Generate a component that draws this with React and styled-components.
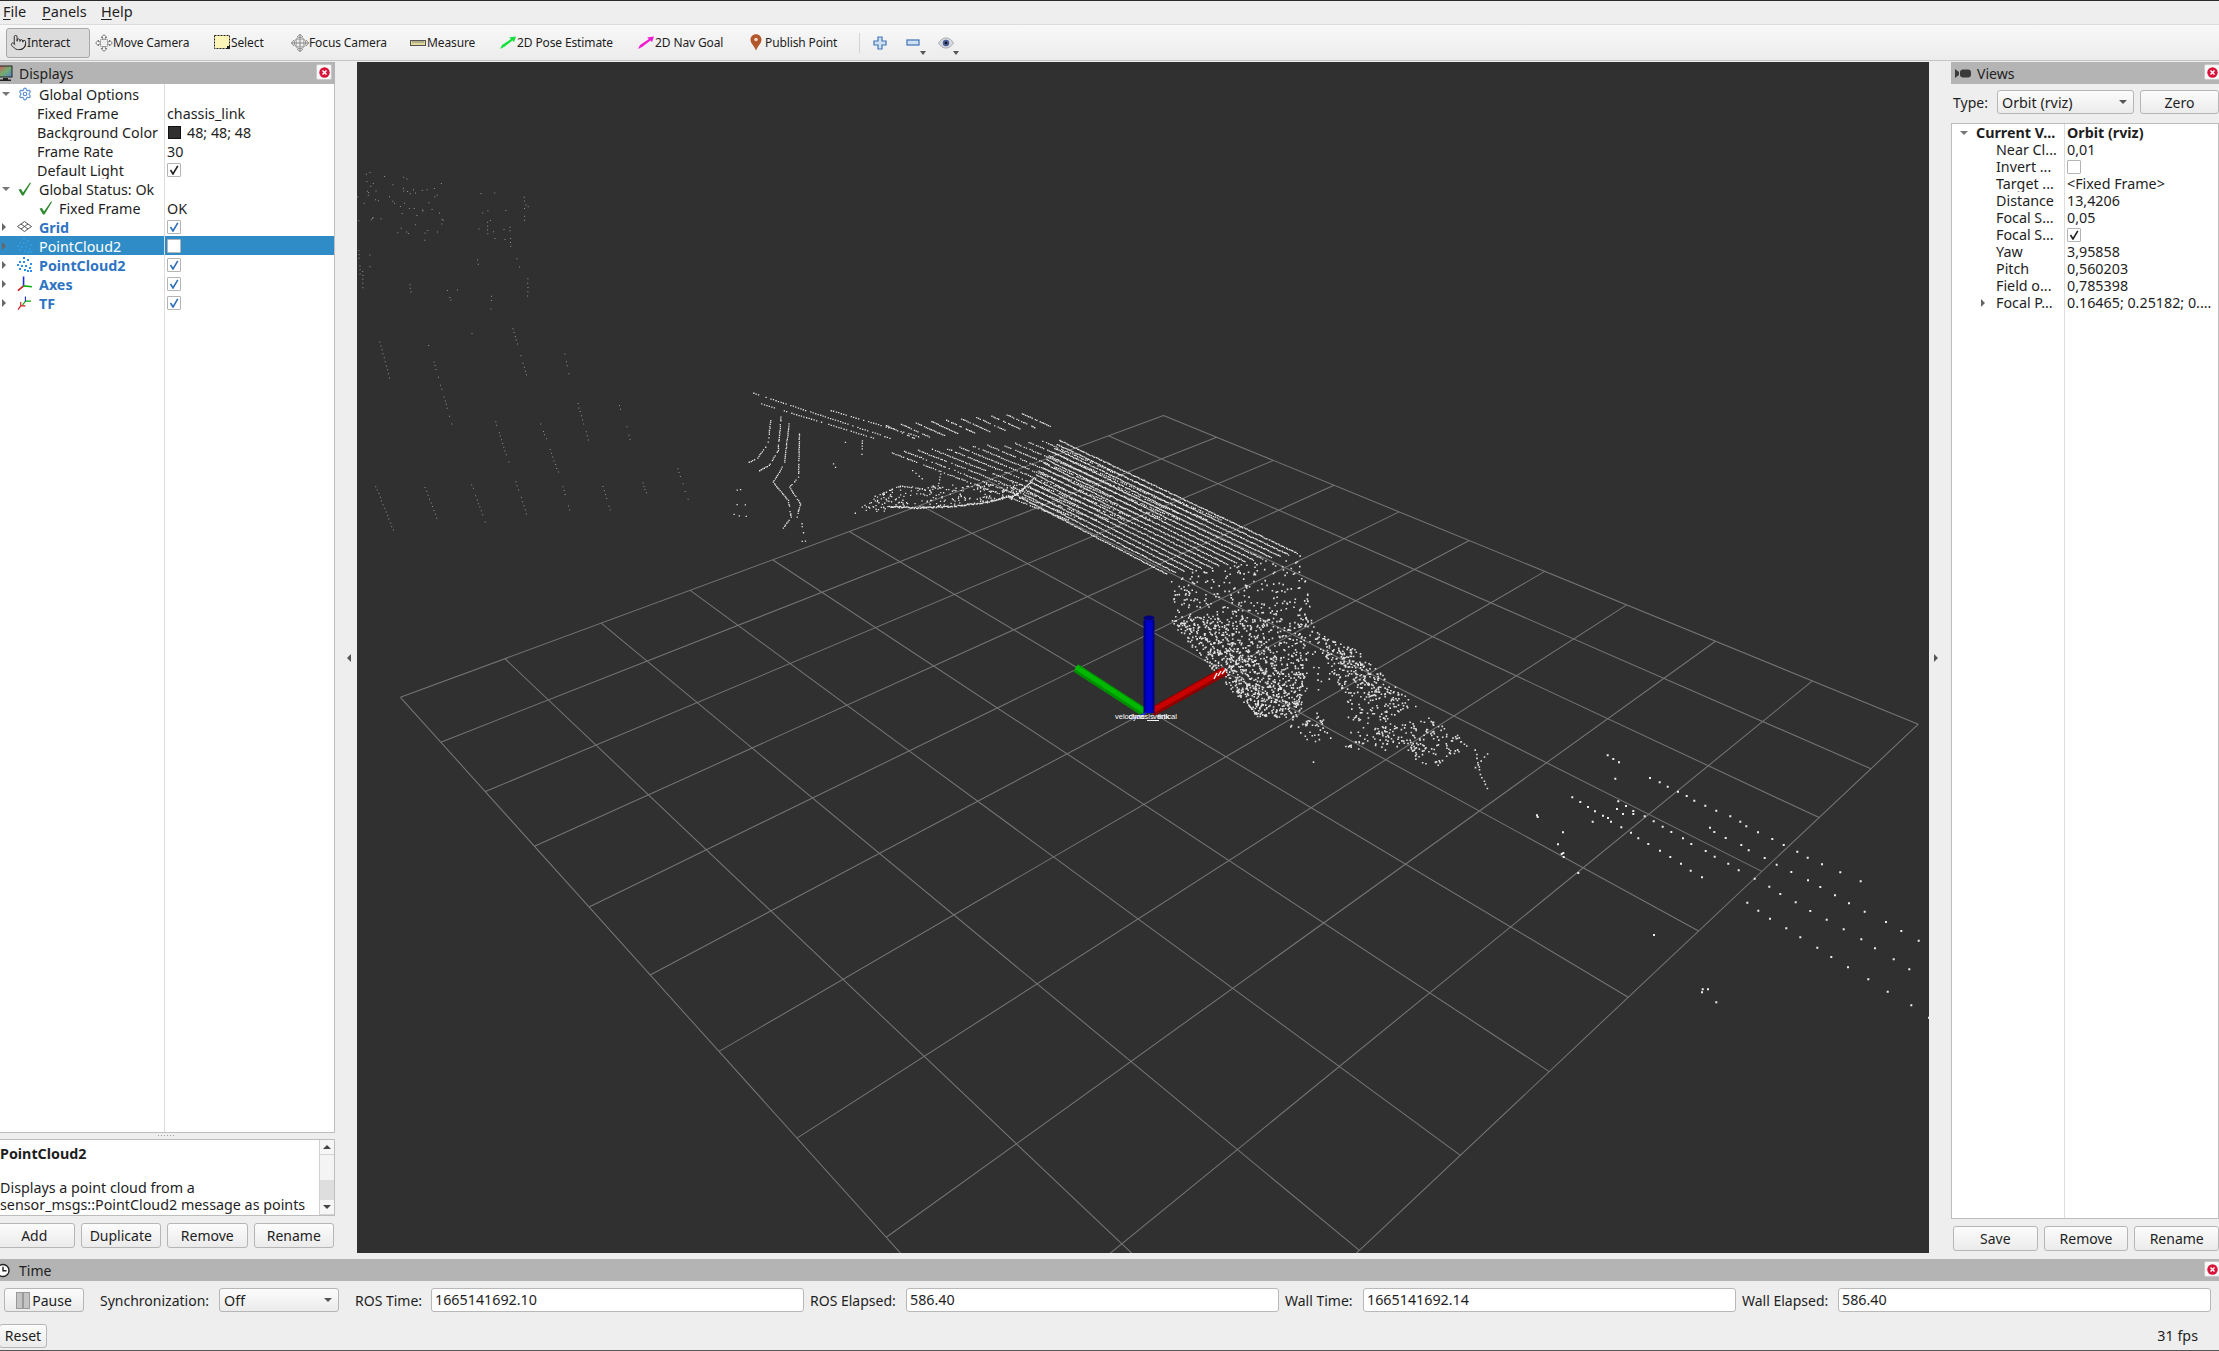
import React, { useMemo } from "react";
import styled, { createGlobalStyle, css } from "styled-components";
import { Pointer, Settings } from "lucide-react";

const GlobalStyle = createGlobalStyle`
  html, body { margin: 0; padding: 0; background: #eeeeee; }
  body { font-family: "Noto Sans", "Open Sans", sans-serif; font-size: 14.3px; color: #1e1e1e; }
`;

const Window = styled.div`
  width: 2219px;
  height: 1351px;
  overflow: hidden;
  display: flex;
  flex-direction: column;
  background: #eeeeee;
  border-top: 1px solid #2a2a2a;
  box-sizing: border-box;
`;

/* menu + toolbar */
const MenuBar = styled.div`
  height: 23px;
  display: flex;
  align-items: center;
  padding: 0 0 2px 3px;
  box-sizing: border-box;
  gap: 14px;
  font-size: 14.5px;
  flex: none;
`;
const MenuItem = styled.span`
  width: ${p => p.$w}px;
  line-height: 21px;
`;
const Mnemonic = styled.span`
  text-decoration: underline;
  text-underline-offset: 2px;
`;
const ToolBar = styled.div`
  height: 37px;
  flex: none;
  display: flex;
  align-items: center;
  padding-left: 6px;
  box-sizing: border-box;
  background: linear-gradient(#f8f8f8, #ececec);
  border-top: 1px solid #dcdcdc;
  border-bottom: 1px solid #c4c4c4;
  font-size: 12px;
  letter-spacing: -0.12px;
  margin-bottom: 1px;
`;
const ToolButton = styled.div`
  width: ${p => p.$w}px;
  height: 30px;
  flex: none;
  display: flex;
  align-items: center;
  padding-left: 3px;
  box-sizing: border-box;
  white-space: nowrap;
  ${p =>
    p.$active &&
    css`
      background: #dcdcdc;
      border: 1px solid #a8a8a8;
      border-radius: 3px;
      padding-left: 2px;
      width: ${p.$w - 2}px;
      margin-right: 2px;
    `}
`;
const ToolIcon = styled.span`
  width: 18px;
  height: 18px;
  flex: none;
  display: flex;
  align-items: center;
  justify-content: center;
`;
const ToolSep = styled.div`
  width: 1px;
  height: 20px;
  margin: 0 3px 0 3px;
  background: #d4d4d4;
`;
const IconButton = styled.div`
  width: 33px;
  height: 30px;
  flex: none;
  position: relative;
  display: flex;
  align-items: center;
  justify-content: center;
`;
const DropMark = styled.span`
  position: absolute;
  right: 3px;
  bottom: 3px;
  border-left: 3px solid transparent;
  border-right: 3px solid transparent;
  border-top: 4px solid #555;
`;

/* main layout */
const Main = styled.div`
  height: 1191px;
  flex: none;
  display: flex;
`;
const Dock = styled.div`
  width: ${p => p.$w}px;
  flex: none;
  display: flex;
  flex-direction: column;
  overflow: hidden;
`;
const DockHeader = styled.div`
  height: 22px;
  flex: none;
  display: flex;
  align-items: center;
  background: #b4b4b4;
  padding-left: ${p => p.$pad || 0}px;
  gap: 6px;
  font-size: 14px;
  color: #222;
  position: relative;
  overflow: hidden;
`;
const CloseBox = styled.div`
  position: absolute;
  right: ${p => p.$right || 2}px;
  top: 2px;
  width: 16px;
  height: 16px;
  box-sizing: border-box;
  background: #f8f8f8;
  border: 1px solid #c8c8c8;
  border-radius: 2px;
  display: flex;
  align-items: center;
  justify-content: center;
`;
const Gutter = styled.div`
  width: ${p => p.$w}px;
  flex: none;
  display: flex;
  align-items: center;
  justify-content: ${p => (p.$right ? "flex-start" : "flex-end")};
  padding: ${p => (p.$right ? "0 0 0 5px" : "0 6px 0 0")};
  box-sizing: border-box;
`;
const Collapse = styled.span`
  border-top: 4px solid transparent;
  border-bottom: 4px solid transparent;
  ${p =>
    p.$right
      ? "border-left: 4px solid #555;"
      : "border-right: 4px solid #555;"}
`;
const Viewport = styled.div`
  flex: 1;
  background: #303030;
  overflow: hidden;
`;
const SceneSvg = styled.svg`
  display: block;
  width: 1572px;
  height: 1191px;
`;

/* property tree */
const Tree = styled.div`
  flex: 1;
  display: flex;
  flex-direction: column;
  background: #ffffff;
  border: 1px solid #bdbdbd;
  border-left-width: ${p => (p.$noLeft ? 0 : 1)}px;
  border-top-width: ${p => (p.$framed ? 1 : 0)}px;
  min-height: 0;
  overflow: hidden;
`;
const Row = styled.div`
  height: ${p => p.$h}px;
  flex: none;
  display: grid;
  grid-template-columns: ${p => p.$col}px 1fr;
  ${p =>
    p.$selected &&
    css`
      background: #308cc6;
      color: #fff;
    `}
`;
const FillRow = styled(Row)`
  flex: 1;
  height: auto;
`;
const NameCell = styled.div`
  position: relative;
  border-right: 1px solid #dddddd;
  white-space: nowrap;
  overflow: hidden;
  display: flex;
  align-items: center;
  padding-left: ${p => p.$indent}px;
  padding-top: ${p => p.$top || 0}px;
  box-sizing: border-box;
  font-weight: ${p => (p.$bold ? 700 : 400)};
  color: ${p => (p.$blue ? "#2e74c2" : "inherit")};
`;
const ValueCell = styled.div`
  display: flex;
  align-items: center;
  gap: 6px;
  padding-left: 2px;
  padding-top: ${p => p.$top || 0}px;
  white-space: nowrap;
  overflow: hidden;
  font-weight: ${p => (p.$bold ? 700 : 400)};
`;
const Twisty = styled.span`
  position: absolute;
  left: ${p => p.$left}px;
  top: 50%;
  ${p =>
    p.$open
      ? css`
          margin-top: -2px;
          border-left: 4px solid transparent;
          border-right: 4px solid transparent;
          border-top: 4px solid #777;
        `
      : css`
          margin-top: -4px;
          border-top: 4px solid transparent;
          border-bottom: 4px solid transparent;
          border-left: 4px solid #666;
        `}
`;
const RowIcon = styled.span`
  position: absolute;
  left: ${p => p.$left}px;
  top: 2px;
  width: 15px;
  height: 15px;
  display: flex;
  align-items: center;
  justify-content: center;
`;
const CheckBox = styled.span`
  width: 14px;
  height: 14px;
  box-sizing: border-box;
  background: #fff;
  border: 1px solid #b4b4b4;
  border-radius: 1px;
  display: flex;
  align-items: center;
  justify-content: center;
  flex: none;
`;
const Swatch = styled.span`
  width: 13px;
  height: 13px;
  box-sizing: border-box;
  background: #303030;
  border: 1px solid #111;
  margin-left: 1px;
  flex: none;
`;

/* description */
const Splitter = styled.div`
  height: 5px;
  flex: none;
  display: flex;
  justify-content: center;
  align-items: center;
`;
const SplitDots = styled.span`
  width: 16px;
  height: 1px;
  margin-left: -4px;
  background: repeating-linear-gradient(90deg, #a0a0a0 0 1px, transparent 1px 3px);
`;
const Description = styled.div`
  height: 77px;
  flex: none;
  margin-top: 1px;
  display: flex;
  background: #fff;
  border: 1px solid #bdbdbd;
  border-left: 0;
  box-sizing: border-box;
`;
const DescText = styled.div`
  flex: 1;
  overflow: hidden;
  line-height: 17px;
  padding-top: 5px;
  white-space: nowrap;
`;
const DescTitle = styled.div`
  font-weight: 700;
  height: 34px;
`;
const ScrollBar = styled.div`
  width: 14px;
  flex: none;
  display: flex;
  flex-direction: column;
  background: #f4f4f4;
  border-left: 1px solid #d0d0d0;
`;
const ScrollButton = styled.div`
  height: 14px;
  flex: none;
  display: flex;
  align-items: center;
  justify-content: center;
  background: #f6f6f6;
  border-bottom: 1px solid #d4d4d4;
`;
const ScrollArrow = styled.span`
  border-left: 4px solid transparent;
  border-right: 4px solid transparent;
  ${p => (p.$down ? "border-top: 4px solid #444;" : "border-bottom: 4px solid #444;")}
`;
const ScrollGap = styled.div`
  flex: 1;
`;
const ScrollThumb = styled.div`
  height: 20px;
  flex: none;
  background: #dedede;
`;

/* buttons */
const ButtonRow = styled.div`
  display: flex;
  gap: 6px;
  flex: none;
  margin: ${p => p.$margin};
`;
const Button = styled.div`
  flex: ${p => (p.$w ? "none" : 1)};
  width: ${p => (p.$w ? p.$w + "px" : "auto")};
  height: ${p => p.$h || 25}px;
  box-sizing: border-box;
  display: flex;
  align-items: center;
  justify-content: center;
  gap: 2px;
  border: 1px solid #b6b6b6;
  border-radius: 3px;
  background: linear-gradient(#fcfcfc, #ebebeb);
  font-size: 14px;
`;
const TypeRow = styled.div`
  height: 24px;
  flex: none;
  margin: 6px 0 9px 0;
  display: flex;
  align-items: center;
  padding-left: 2px;
  gap: 6px;
`;
const PlainLabel = styled.span`
  width: ${p => p.$w}px;
  flex: none;
  white-space: nowrap;
  margin-left: ${p => p.$ml || 0}px;
  font-size: 14px;
`;
const Combo = styled.div`
  width: ${p => p.$w}px;
  height: 24px;
  flex: none;
  box-sizing: border-box;
  display: flex;
  align-items: center;
  justify-content: space-between;
  padding: 0 6px 0 4px;
  border: 1px solid #b6b6b6;
  border-radius: 3px;
  background: linear-gradient(#fcfcfc, #ebebeb);
  margin-right: ${p => p.$mr || 0}px;
`;
const ComboArrow = styled.span`
  border-left: 4px solid transparent;
  border-right: 4px solid transparent;
  border-top: 4px solid #555;
`;

/* time panel */
const TimeDock = styled.div`
  flex: 1;
  margin-top: 6px;
  display: flex;
  flex-direction: column;
  overflow: hidden;
`;
const TimeRow = styled.div`
  height: 24px;
  flex: none;
  margin-top: 7px;
  padding: 0 8px 0 4px;
  display: flex;
  align-items: center;
  gap: 6px;
`;
const LineEdit = styled.div`
  flex: 1;
  height: 24px;
  box-sizing: border-box;
  background: #fff;
  border: 1px solid #b8b8b8;
  border-radius: 3px;
  padding-left: 3px;
  line-height: 22px;
`;
const StatusRow = styled.div`
  height: 23px;
  flex: none;
  margin-top: 12px;
  display: flex;
  align-items: center;
  justify-content: space-between;
  padding-right: 21px;
`;
const ResetButton = styled(Button)`
  flex: none;
  width: 48px;
  height: 24px;
  margin-left: -1px;
`;
const WindowEdge = styled.div`
  height: 1px;
  margin-top: 3px;
  flex: none;
  background: #555;
`;

/* icons */
const DropShape = ({ color }) => (
  <svg width="18" height="14" viewBox="0 0 18 14">
    <path d="M1 13 L3 9 L12 3 L10 1.5 L17 0.5 L15 6 L13.5 4.5 L5 11 Z" fill={color} />
  </svg>
);
const MoveIcon = () => (
  <svg width="18" height="18" viewBox="0 0 18 18" fill="#fff" stroke="#777" strokeWidth="1">
    <path d="M9 .7 12 3.5H10.2V6H7.8V3.5H6ZM9 17.3 6 14.5H7.8V12H10.2V14.5H12ZM.7 9 3.5 6V7.8H6V10.2H3.5V12ZM17.3 9 14.5 12V10.2H12V7.8H14.5V6Z" />
    <rect x="5.5" y="5.5" width="7" height="7" fill="#eee" strokeDasharray="1 1" />
  </svg>
);
const SelectIcon = () => (
  <svg width="17" height="15" viewBox="0 0 17 15">
    <rect x=".5" y=".5" width="15" height="13" fill="#fbf6b8" stroke="#222" strokeDasharray="2 1" />
    <rect x="13" y="11" width="3" height="3" fill="#222" />
  </svg>
);
const FocusIcon = () => (
  <svg width="18" height="18" viewBox="0 0 18 18" fill="none" stroke="#888" strokeWidth="1">
    <circle cx="9" cy="9" r="5.5" fill="#eee" />
    <path d="M9 0V18M0 9H18M6 3 9 .5 12 3M6 15 9 17.5 12 15M3 6 .5 9 3 12M15 6 17.5 9 15 12" />
    <path d="M5.5 5.5H12.5V12.5H5.5Z" strokeDasharray="1 1" />
  </svg>
);
const RulerIcon = () => (
  <svg width="16" height="6" viewBox="0 0 16 6">
    <rect x=".5" y=".5" width="15" height="5" fill="#e0d79a" stroke="#555" />
    <path d="M3 1V3M5 1V3M7 1V3M9 1V3M11 1V3M13 1V3" stroke="#666" strokeWidth=".7" />
  </svg>
);
const PinIcon = () => (
  <svg width="12" height="17" viewBox="0 0 12 17">
    <path d="M6 .3C2.8.3.5 2.7.5 5.8.5 9.5 4.7 12.5 6 16.7 7.3 12.5 11.5 9.5 11.5 5.8 11.5 2.7 9.2.3 6 .3Z" fill="#b2562c" />
    <circle cx="6" cy="5.5" r="1.8" fill="#f0d9c8" />
  </svg>
);
const PlusIcon = () => (
  <svg width="14" height="14" viewBox="0 0 14 14">
    <path d="M5 1H9V5H13V9H9V13H5V9H1V5H5Z" fill="#cfe0f2" stroke="#3f74b5" strokeWidth="1.2" />
  </svg>
);
const MinusIcon = () => (
  <svg width="14" height="8" viewBox="0 0 14 8">
    <rect x="1" y="1" width="12" height="5" fill="#cfe0f2" stroke="#3f74b5" strokeWidth="1.2" />
  </svg>
);
const EyeIcon = () => (
  <svg width="16" height="12" viewBox="0 0 16 12">
    <path d="M.5 6C3 2 5.5 1 8 1s5 1 7.5 5c-2.5 4-5 5-7.5 5S3 10 .5 6Z" fill="#d5d8dd" stroke="#a8abb0" />
    <circle cx="8" cy="6" r="3.2" fill="#4a5c9a" />
    <circle cx="8" cy="6" r="1.3" fill="#111" />
  </svg>
);
const MonitorIcon = () => (
  <svg width="13" height="17" viewBox="0 0 13 17">
    <defs>
      <linearGradient id="screenGrad" x1="0" x2="1" y1="0" y2="1">
        <stop offset="0" stopColor="#d25a5a" />
        <stop offset=".5" stopColor="#6fae6f" />
        <stop offset="1" stopColor="#5b7fd0" />
      </linearGradient>
    </defs>
    <rect x="-1" y="1" width="13" height="11" fill="url(#screenGrad)" stroke="#222" />
    <path d="M3 13H8V14.5H11V16H0V14.5H3Z" fill="#222" />
  </svg>
);
const CameraIcon = () => (
  <svg width="16" height="9" viewBox="0 0 16 9">
    <path d="M0 0 4 3V6L0 9Z" fill="#3a3a3a" />
    <rect x="5" y="0.5" width="11" height="8" rx="3" fill="#3a3a3a" />
  </svg>
);
const ClockIcon = () => (
  <svg width="13" height="15" viewBox="0 0 13 15">
    <circle cx="3" cy="7.5" r="6" fill="#fff" stroke="#222" strokeWidth="1.4" />
    <path d="M3 3.8V7.8H6.5" fill="none" stroke="#222" strokeWidth="1.4" />
  </svg>
);
const CloseIcon = () => (
  <svg width="11" height="11" viewBox="0 0 11 11">
    <circle cx="5.5" cy="5.5" r="5.2" fill="#d8143a" />
    <path d="M3.5 3.5 7.5 7.5M7.5 3.5 3.5 7.5" stroke="#fff" strokeWidth="1.5" />
  </svg>
);
const Tick = ({ color = "#222" }) => (
  <svg width="10" height="10" viewBox="0 0 10 10">
    <path d="M1.5 5 4 9 8.8 .8" fill="none" stroke={color} strokeWidth="1.6" />
  </svg>
);
const GreenCheck = () => (
  <svg width="14" height="14" viewBox="0 0 14 14">
    <path d="M.5 7.5 3 7 5 10.5 12 .5 13 1 5.5 13.5H4Z" fill="#2c8a2c" />
  </svg>
);
const GridIcon = () => (
  <svg width="15" height="11" viewBox="0 0 15 11" fill="none" stroke="#444" strokeWidth=".9">
    <path d="M7.5 .5 14.5 5.5 7.5 10.5 .5 5.5ZM4 3 11 8M11 3 4 8" />
  </svg>
);
const CloudIcon = ({ dim }) => (
  <svg width="15" height="15" viewBox="0 0 15 15" fill={dim ? "#2f9ae0" : "#2a8df0"}>
    {[[6, 0], [10, 2], [2, 4], [6, 4], [13, 6], [0, 7], [4, 8], [8, 8], [12, 10], [2, 11], [7, 12], [10, 13], [13, 13]].map(([x, y]) => (
      <rect key={x + "-" + y} x={x} y={y} width="2" height="2" />
    ))}
  </svg>
);
const AxesIcon = () => (
  <svg width="16" height="16" viewBox="0 0 16 16" fill="none" strokeWidth="1.7">
    <path d="M7 10V0" stroke="#1a2fd0" />
    <path d="M7 10 1 15" stroke="#d01a1a" />
    <path d="M7 10 16 11" stroke="#10b010" />
  </svg>
);
const TfIcon = () => (
  <svg width="16" height="16" viewBox="0 0 16 16" fill="none" strokeWidth="1.2">
    <path d="M4 11 1 15M4 11 9 11M4 11V7" stroke="#d01a1a" />
    <path d="M9 6 6 10M9 6 15 6" stroke="#10a010" />
    <path d="M9 6V1" stroke="#1a2fd0" />
  </svg>
);
const PauseIcon = () => (
  <svg width="14" height="17" viewBox="0 0 14 17">
    <rect x=".5" y=".5" width="6" height="16" fill="#c4c4c4" stroke="#999" />
    <rect x="7.5" y=".5" width="6" height="16" fill="#c4c4c4" stroke="#999" />
  </svg>
);

/* scene */
const mulberry = seed => () => {
  seed |= 0;
  seed = (seed + 0x6d2b79f5) | 0;
  let t = Math.imul(seed ^ (seed >>> 15), 1 | seed);
  t = (t + Math.imul(t ^ (t >>> 7), 61 | t)) ^ t;
  return ((t ^ (t >>> 14)) >>> 0) / 4294967296;
};

const gridHomography = (F, R, N, L) => {
  const dx1 = R[0] - N[0];
  const dx2 = L[0] - N[0];
  const sx = F[0] - R[0] + N[0] - L[0];
  const dy1 = R[1] - N[1];
  const dy2 = L[1] - N[1];
  const sy = F[1] - R[1] + N[1] - L[1];
  const den = dx1 * dy2 - dx2 * dy1;
  const g = (sx * dy2 - dx2 * sy) / den;
  const h = (dx1 * sy - sx * dy1) / den;
  const a = R[0] - F[0] + g * R[0];
  const b = L[0] - F[0] + h * L[0];
  const d = R[1] - F[1] + g * R[1];
  const e = L[1] - F[1] + h * L[1];
  return (u, v) => {
    const w = g * u + h * v + 1;
    return [(a * u + b * v + F[0]) / w, (d * u + e * v + F[1]) / w];
  };
};

const z7 = ([x, y]) => [700 + x / 2.45, 370 + y / 3];
const z8 = ([x, y]) => [1100 + x / 3, 540 + y / 3];
const z11 = ([x, y]) => [357 + x / 3, 150 + y / 3];
const z12 = ([x, y]) => [1480 + x / 3, 730 + y / 3];

const FAR_RIGHT = [
  [380,73],[397,84],[414,94],[403,143],[507,141],[536,154],[560,167],[591,182],[617,195],[640,209],[673,224],[706,239],[748,256],[778,272],[796,286],[831,304],[874,324],[908,342],[949,362],[980,380],[1023,400],[1078,424],[1139,451],
  [274,199],[298,213],[321,228],[342,241],[366,254],[381,261],[390,272],[421,289],[450,305],[472,322],[502,339],[537,359],[568,378],[600,398],[629,419],[663,439],
  [412,211],[435,225],[457,240],[491,256],[518,271],[545,287],[571,303],[606,322],[631,339],[674,360],[701,377],[742,398],[773,418],[821,443],
  [408,234],[426,249],[457,249],[335,272],
  [687,290],[700,303],[734,321],[781,342],[803,358],[851,381],[887,401],[931,423],[981,448],[1018,468],[1062,493],[1104,517],[1151,542],[1215,573],[1261,600],[1313,629],
  [865,467],[898,489],[944,514],[988,540],[1037,566],[1088,595],[1141,625],[1182,652],[1238,685],[1285,715],
  [799,515],[832,539],[867,563],[916,592],[958,619],[1009,650],[1051,678],[1101,709],[1162,745],[1220,782],[1291,823],[1344,860],
  [168,253],[170,258],[246,304],[231,340],[247,366],[242,369],[248,378],[292,426],[519,612],[665,775],[663,784],[681,775],[706,814]
];

const FAR_LEFT_LINES = [
  [[55,1008],[112,1150]],[[199,1000],[247,1126]],[[343,1003],[387,1126]],[[475,994],[511,1102]],[[616,1009],[643,1102]],[[733,997],[766,1102]],[[856,997],[874,1048]],[[961,955],[995,1057]],
  [[67,574],[103,706]],[[229,634],[286,832]],[[411,802],[457,946]],[[550,820],[606,976]],[[463,523],[510,685]],[[619,598],[637,682]],[[661,760],[697,880]],[[781,754],[794,787]],[[808,829],[820,880]],
  [[211,574],[217,598]],[[361,610],[361,622]],[[343,549],[346,562]],
  [[391,170],[391,260]],[[500,140],[502,232]],[[505,163],[520,175]],[[360,316],[364,380]],[[478,325],[490,361]],[[511,385],[511,450]],[[403,426],[400,487]],[[16,362],[16,436]],[[37,313],[37,360]],[[4,300],[10,405]],[[458,230],[460,298]],[[157,403],[163,436]],[[270,420],[283,460]],[[300,418],[300,428]]
];

const useScene = () =>
  useMemo(() => {
    const rnd = mulberry(4711);
    const fine = [];
    const spread = [];
    const sparse = [];
    const dim = [];
    const put = (arr, p, jit = 0) =>
      arr.push([p[0] + (rnd() - 0.5) * jit, p[1] + (rnd() - 0.5) * jit]);
    const walk = (arr, conv, pts, step, jit, keep = 1) => {
      for (let i = 0; i < pts.length - 1; i++) {
        const a = conv(pts[i]);
        const b = conv(pts[i + 1]);
        const len = Math.hypot(b[0] - a[0], b[1] - a[1]);
        const n = Math.max(1, Math.round(len / step));
        for (let k = 0; k < n; k++) {
          if (rnd() > keep) continue;
          put(arr, [a[0] + ((b[0] - a[0]) * k) / n, a[1] + ((b[1] - a[1]) * k) / n], jit);
        }
      }
    };
    const quad = (arr, conv, q, count) => {
      for (let i = 0; i < count; i++) {
        const s = rnd();
        const t = rnd();
        const top = [q[0][0] + (q[1][0] - q[0][0]) * s, q[0][1] + (q[1][1] - q[0][1]) * s];
        const bot = [q[3][0] + (q[2][0] - q[3][0]) * s, q[3][1] + (q[2][1] - q[3][1]) * s];
        arr.push(conv([top[0] + (bot[0] - top[0]) * t, top[1] + (bot[1] - top[1]) * t]));
      }
    };

    // scan lines of the ramp
    const lines = 16;
    for (let i = 0; i < lines; i++) {
      const t = i / (lines - 1);
      const s = [880 - 95 * t, 210 + 172 * t];
      const e = [1465 - 320 * t, 550 + 62 * t];
      walk(fine, z7, [s, e], 1.5, 0.7);
    }
    for (let k = 0; k < 12; k++) {
      const s = [465 + k * 34, 245 - k * 3];
      walk(fine, z7, [s, [s[0] + 440, s[1] + 205 + k * 3]], 2, 0.7, 0.85);
    }
    for (let k = 0; k < 10; k++) {
      const s = [455 + k * 37, 165 - k * 4];
      walk(fine, z7, [s, [s[0] + 72, s[1] + 40]], 1.8, 0.4, 0.85);
    }
    walk(fine, z7, [[130, 68], [470, 205]], 2.6, 0.4, 0.8);
    walk(fine, z7, [[150, 100], [430, 205]], 2.6, 0.4, 0.8);
    walk(fine, z7, [[320, 120], [540, 200]], 2.6, 0.4, 0.8);

    // ground arc and its fuzz
    walk(fine, z7, [[460, 408], [530, 412], [620, 408], [700, 395], [770, 375], [800, 345], [815, 325]], 0.9, 1.4);
    quad(fine, z7, [[450, 350], [790, 335], [790, 385], [375, 432]], 240);

    // walls on the left
    const wall = (pts, step = 1.9, keep = 0.9) => walk(fine, z7, pts, step, 0.5, keep);
    wall([[172, 150], [165, 220], [140, 262], [115, 278]]);
    wall([[197, 140], [190, 240], [168, 285], [140, 303]]);
    wall([[217, 160], [205, 280], [178, 335], [215, 390], [222, 440], [200, 477]]);
    wall([[242, 190], [240, 320], [218, 350], [245, 400], [235, 445]]);
    wall([[248, 460], [257, 512], [242, 514]], 3, 0.7);
    wall([[355, 215], [357, 240]], 4, 0.7);
    wall([[396, 210], [395, 260]], 3);
    wall([[325, 280], [335, 300]], 4, 0.7);
    wall([[345, 325], [350, 345]], 4, 0.7);
    wall([[55, 420], [95, 436], [145, 438]], 6, 0.6);
    wall([[90, 358], [105, 356]], 4);
    wall([[90, 402], [120, 404]], 4);
    wall([[440, 372], [490, 346], [548, 356]], 2.2);
    wall([[520, 300], [550, 332]], 4, 0.7);
    wall([[588, 310], [575, 392]], 3);
    wall([[370, 385], [368, 395]], 3);

    // near ground scatter
    quad(spread, z8, [[205, 100], [600, 45], [640, 260], [230, 270]], 280);
    quad(spread, z8, [[215, 240], [640, 240], [600, 530], [470, 530]], 620);
    for (let j = 0; j < 6; j++) {
      const ox = j * 26;
      const oy = -j * 4;
      walk(spread, z8, [[215 + ox, 240 + oy], [340 + ox, 390 + oy], [470 + ox, 520 + oy]], 2.2, 3, 0.75);
    }
    for (let j = 0; j < 10; j++) {
      const sx = 300 + j * 30;
      const sy = 220 - j * 5 + rnd() * 20;
      const bend = 30 + rnd() * 50;
      walk(spread, z8, [[sx, sy], [sx + 90, sy + 110], [sx + 90 + bend + 100, sy + 280 - j * 8]], 3.2, 6, 0.5);
    }
    quad(spread, z8, [[630, 270], [770, 330], [950, 500], [780, 560]], 290);
    walk(spread, z8, [[760, 390], [830, 440], [900, 490]], 2.4, 11);
    quad(spread, z8, [[800, 560], [990, 530], [1110, 610], [990, 690]], 150);
    quad(spread, z8, [[720, 520], [930, 540], [950, 640], [740, 620]], 45);
    quad(spread, z8, [[565, 530], [690, 510], [690, 610], [570, 590]], 40);
    quad(spread, z8, [[735, 600], [795, 600], [795, 642], [735, 640]], 10);
    walk(spread, z8, [[1125, 630], [1140, 700], [1165, 752]], 4, 1.5);
    walk(spread, z8, [[1160, 640], [1115, 692]], 5, 1.5);
    spread.push(z8([638, 664]));

    // sparse returns, lower right
    FAR_RIGHT.forEach(p => sparse.push(z12(p)));

    // sparse returns, upper left
    FAR_LEFT_LINES.forEach(l => walk(dim, z11, l, 4, 0.5, 0.75));
    quad(dim, z11, [[0, 50], [260, 100], [260, 300], [0, 240]], 60);
    quad(dim, z11, [[355, 110], [450, 110], [450, 270], [355, 270]], 10);

    const toPath = (arr, size) =>
      arr.map(([x, y]) => `M${x.toFixed(1)} ${y.toFixed(1)}h${size}v${size}h-${size}z`).join("");

    // floor grid
    const P = gridHomography([1163.5, 415.5], [1918.3, 724.2], [1109.6, 1485.5], [400.4, 697.3]);
    let grid = "";
    for (let i = 0; i <= 10; i++) {
      const a = P(i / 10, 0);
      const b = P(i / 10, 1);
      const c = P(0, i / 10);
      const d = P(1, i / 10);
      grid += `M${a[0].toFixed(1)} ${a[1].toFixed(1)}L${b[0].toFixed(1)} ${b[1].toFixed(1)}`;
      grid += `M${c[0].toFixed(1)} ${c[1].toFixed(1)}L${d[0].toFixed(1)} ${d[1].toFixed(1)}`;
    }
    return {
      grid,
      fine: toPath(fine, 1.3),
      spread: toPath(spread, 1.6),
      sparse: toPath(sparse, 2),
      dim: toPath(dim, 1)
    };
  }, []);

const Scene = () => {
  const { grid, fine, spread, sparse, dim } = useScene();
  return (
    <SceneSvg viewBox="357 62 1572 1191">
      <path d={grid} fill="none" stroke="#747474" strokeWidth="1.05" />
      <path d={dim} fill="#949494" />
      <path d={fine} fill="#e4e4e4" />
      <path d={spread} fill="#e0e0e0" />
      <path d={sparse} fill="#eeeeee" />

      {/* frame axes */}
      <g fill="none" strokeLinecap="butt">
        <path d="M1076 668 1144 712" stroke="#008e00" strokeWidth="9" />
        <path d="M1076 667 1144 711" stroke="#00b800" strokeWidth="5" />
        <path d="M1152 712 1225 671" stroke="#8e0000" strokeWidth="9" />
        <path d="M1152 711 1225 670" stroke="#c80000" strokeWidth="5" />
        <path d="M1149 620V713" stroke="#000090" strokeWidth="11" />
        <path d="M1149 620V713" stroke="#0000cc" strokeWidth="6" />
        <path d="M1217 673 1214 679M1221 671 1218 676M1225 670 1222 674" stroke="#f4f4f4" strokeWidth="1.4" />
        <path d="M1133 719 1146 713" stroke="#1a2fe0" strokeWidth="1.5" />
        <path d="M1147 720.5H1159" stroke="#eee" strokeWidth="1" />
      </g>
      <ellipse cx="1149" cy="618" rx="5.5" ry="2.5" fill="#000080" />
      <g fill="#ffffff" fontSize="7.5" fontFamily="Liberation Sans, sans-serif" textAnchor="middle">
        <text x="1130" y="719">velodyne</text>
        <text x="1149" y="719">chassis_link</text>
        <text x="1165" y="719">vertical</text>
      </g>
    </SceneSvg>
  );
};

/* data */
const TOOLS = [
  { label: "Interact", w: 86, active: true, icon: <Pointer size={17} strokeWidth={1.3} color="#222" /> },
  { label: "Move Camera", w: 118, icon: <MoveIcon /> },
  { label: "Select", w: 78, icon: <SelectIcon /> },
  { label: "Focus Camera", w: 118, icon: <FocusIcon /> },
  { label: "Measure", w: 90, icon: <RulerIcon /> },
  { label: "2D Pose Estimate", w: 138, icon: <DropShape color="#14e23c" /> },
  { label: "2D Nav Goal", w: 110, icon: <DropShape color="#f01ad0" /> },
  { label: "Publish Point", w: 112, icon: <PinIcon /> }
];

const LEFT_ROWS = [
  { name: "Global Options", indent: 39, twisty: "open", icon: <Settings size={14} strokeWidth={2} color="#5a8fd8" /> },
  { name: "Fixed Frame", indent: 37, value: "chassis_link" },
  { name: "Background Color", indent: 37, value: "48; 48; 48", swatch: true },
  { name: "Frame Rate", indent: 37, value: "30" },
  { name: "Default Light", indent: 37, check: "#222" },
  { name: "Global Status: Ok", indent: 39, twisty: "open", icon: <GreenCheck /> },
  { name: "Fixed Frame", indent: 59, value: "OK", iconLeft: 38, icon: <GreenCheck /> },
  { name: "Grid", indent: 39, twisty: "closed", blue: true, check: "#2e6fb5", icon: <GridIcon /> },
  { name: "PointCloud2", indent: 39, twisty: "closed", selected: true, check: "none", icon: <CloudIcon dim /> },
  { name: "PointCloud2", indent: 39, twisty: "closed", blue: true, check: "#2e6fb5", icon: <CloudIcon /> },
  { name: "Axes", indent: 39, twisty: "closed", blue: true, check: "#2e6fb5", icon: <AxesIcon /> },
  { name: "TF", indent: 39, twisty: "closed", blue: true, check: "#2e6fb5", icon: <TfIcon /> }
];

const VIEW_ROWS = [
  { name: "Near Cl...", value: "0,01" },
  { name: "Invert ...", check: "none" },
  { name: "Target ...", value: "<Fixed Frame>" },
  { name: "Distance", value: "13,4206" },
  { name: "Focal S...", value: "0,05" },
  { name: "Focal S...", check: "#222" },
  { name: "Yaw", value: "3,95858" },
  { name: "Pitch", value: "0,560203" },
  { name: "Field o...", value: "0,785398" },
  { name: "Focal P...", value: "0.16465; 0.25182; 0....", twisty: true }
];

const Check = ({ color }) => (
  <CheckBox>{color !== "none" && <Tick color={color} />}</CheckBox>
);

function DisplayRow({ row }) {
  return (
    <Row $h={19} $col={165} $selected={row.selected}>
      <NameCell $indent={row.indent} $top={1} $bold={row.blue} $blue={row.blue}>
        {row.twisty && <Twisty $left={2} $open={row.twisty === "open"} />}
        {row.icon && <RowIcon $left={row.iconLeft || 17}>{row.icon}</RowIcon>}
        {row.name}
      </NameCell>
      <ValueCell $top={1}>
        {row.check && <Check color={row.check} />}
        {row.swatch && <Swatch />}
        {row.value}
      </ValueCell>
    </Row>
  );
}

export default function App() {
  return (
    <Window>
      <GlobalStyle />
      <MenuBar>
        <MenuItem $w={25}><Mnemonic>F</Mnemonic>ile</MenuItem>
        <MenuItem $w={45}><Mnemonic>P</Mnemonic>anels</MenuItem>
        <MenuItem $w={32}><Mnemonic>H</Mnemonic>elp</MenuItem>
      </MenuBar>

      <ToolBar>
        {TOOLS.map(t => (
          <ToolButton key={t.label} $w={t.w} $active={t.active}>
            <ToolIcon>{t.icon}</ToolIcon>
            {t.label}
          </ToolButton>
        ))}
        <ToolSep />
        <IconButton><PlusIcon /></IconButton>
        <IconButton><MinusIcon /><DropMark /></IconButton>
        <IconButton><EyeIcon /><DropMark /></IconButton>
      </ToolBar>

      <Main>
        <Dock $w={335}>
          <DockHeader>
            <MonitorIcon />
            Displays
            <CloseBox $right={3}><CloseIcon /></CloseBox>
          </DockHeader>
          <Tree $noLeft>
            {LEFT_ROWS.map((row, i) => (
              <DisplayRow key={i} row={row} />
            ))}
            <FillRow $col={165}>
              <NameCell />
              <div />
            </FillRow>
          </Tree>
          <Splitter><SplitDots /></Splitter>
          <Description>
            <DescText>
              <DescTitle>PointCloud2</DescTitle>
              Displays a point cloud from a
              <br />
              sensor_msgs::PointCloud2 message as points
              <br />
              in the world, drawn as points, billboards
            </DescText>
            <ScrollBar>
              <ScrollButton><ScrollArrow /></ScrollButton>
              <ScrollGap />
              <ScrollThumb />
              <ScrollButton><ScrollArrow $down /></ScrollButton>
            </ScrollBar>
          </Description>
          <ButtonRow $margin="7px 1px 5px -6px">
            <Button>Add</Button>
            <Button>Duplicate</Button>
            <Button>Remove</Button>
            <Button>Rename</Button>
          </ButtonRow>
        </Dock>

        <Gutter $w={22}><Collapse /></Gutter>
        <Viewport><Scene /></Viewport>
        <Gutter $w={22} $right><Collapse $right /></Gutter>

        <Dock $w={268}>
          <DockHeader $pad={4}>
            <CameraIcon />
            Views
            <CloseBox $right={-1}><CloseIcon /></CloseBox>
          </DockHeader>
          <TypeRow>
            <PlainLabel $w={38}>Type:</PlainLabel>
            <Combo $w={137}>
              Orbit (rviz)
              <ComboArrow />
            </Combo>
            <Button $w={79} $h={24}>Zero</Button>
          </TypeRow>
          <Tree $framed>
            <Row $h={17} $col={113}>
              <NameCell $indent={24} $bold>
                <Twisty $left={8} $open />
                Current V...
              </NameCell>
              <ValueCell $bold>Orbit (rviz)</ValueCell>
            </Row>
            {VIEW_ROWS.map((row, i) => (
              <Row key={i} $h={17} $col={113}>
                <NameCell $indent={44}>
                  {row.twisty && <Twisty $left={29} />}
                  {row.name}
                </NameCell>
                <ValueCell>
                  {row.check && <Check color={row.check} />}
                  {row.value}
                </ValueCell>
              </Row>
            ))}
            <FillRow $col={113}>
              <NameCell />
              <div />
            </FillRow>
          </Tree>
          <ButtonRow $margin="7px 0 2px 2px">
            <Button>Save</Button>
            <Button>Remove</Button>
            <Button>Rename</Button>
          </ButtonRow>
        </Dock>
      </Main>

      <TimeDock>
        <DockHeader>
          <ClockIcon />
          Time
          <CloseBox $right={-1}><CloseIcon /></CloseBox>
        </DockHeader>
        <TimeRow>
          <Button $w={80} $h={24}><PauseIcon />Pause</Button>
          <PlainLabel $w={113} $ml={10}>Synchronization:</PlainLabel>
          <Combo $w={120} $mr={10}>
            Off
            <ComboArrow />
          </Combo>
          <PlainLabel $w={70}>ROS Time:</PlainLabel>
          <LineEdit>1665141692.10</LineEdit>
          <PlainLabel $w={90}>ROS Elapsed:</PlainLabel>
          <LineEdit>586.40</LineEdit>
          <PlainLabel $w={72}>Wall Time:</PlainLabel>
          <LineEdit>1665141692.14</LineEdit>
          <PlainLabel $w={90}>Wall Elapsed:</PlainLabel>
          <LineEdit>586.40</LineEdit>
        </TimeRow>
        <StatusRow>
          <ResetButton>Reset</ResetButton>
          <span>31 fps</span>
        </StatusRow>
        <WindowEdge />
      </TimeDock>
    </Window>
  );
}
